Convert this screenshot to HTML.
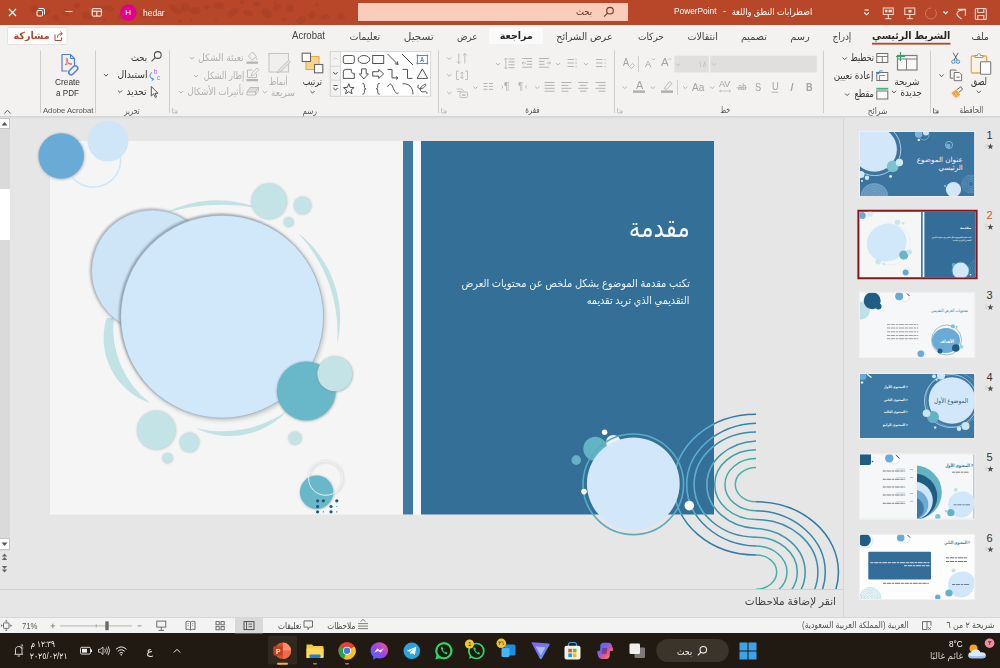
<!DOCTYPE html>
<html lang="ar">
<head>
<meta charset="utf-8">
<title>PowerPoint</title>
<style>
*{box-sizing:border-box;margin:0;padding:0}
html,body{width:1000px;height:668px;overflow:hidden;background:#e6e6e6}
body{position:relative;font-family:"Liberation Sans","DejaVu Sans",sans-serif;font-size:11px;color:#333}
.abs{position:absolute}
.t{position:absolute;white-space:nowrap;line-height:1}
.rtl{direction:rtl;transform-origin:100% 50%}
.ltr{direction:ltr;transform-origin:0 50%}
#titlebar{left:0;top:0;width:1000px;height:24.500px;background:#b8472a}
#tabs{left:0;top:25px;width:1000px;height:22px;background:#f3f2f1}
#ribbon{left:0;top:47px;width:1000px;height:69px;background:#f3f2f1}
#ribsh{left:0;top:116px;width:1000px;height:3px;background:linear-gradient(#d2d2d2,#e6e6e6)}
#work{left:0;top:116px;width:845px;height:472px;background:#e6e6e6}
#thumbs{left:845px;top:118px;width:155px;height:499px;background:#e6e6e6}
#notes{left:0;top:588.700px;width:843px;height:27px;background:#e6e6e6;border-top:1px solid #d0d0d0}
#status{left:0;top:617px;width:1000px;height:17px;background:#f3f3f3;border-top:1px solid #d6d6d6}
#taskbar{left:0;top:633.300px;width:1000px;height:34.700px;background:#201a12}
</style>
</head>
<body>
<div id="titlebar" class="abs">
<svg class="abs" style="left:0;top:0" width="1000" height="25" viewBox="0 0 1000 25" fill="none" stroke="#fff" stroke-width="1">
<!-- subtle pattern -->
<g stroke="none" fill="#a03a20" opacity=".38">
<ellipse cx="34" cy="8.8" rx="3.8" ry="3.6" transform="rotate(-31 34 8.8)"/><ellipse cx="44" cy="13.5" rx="7.5" ry="2.5" transform="rotate(-29 44 13.5)"/><circle cx="48" cy="3.5" r="1.1"/><ellipse cx="56" cy="17.9" rx="3.6" ry="2.6" transform="rotate(40 56 17.9)"/><ellipse cx="66" cy="13.5" rx="3.2" ry="2.6" transform="rotate(31 66 13.5)"/><ellipse cx="77" cy="5.6" rx="3.6" ry="2.8" transform="rotate(-17 77 5.6)"/><circle cx="84" cy="17.6" r="1.2"/><ellipse cx="87" cy="15.8" rx="5.8" ry="3.5" transform="rotate(23 87 15.8)"/><ellipse cx="99" cy="8.7" rx="5.9" ry="3.1" transform="rotate(-2 99 8.7)"/><circle cx="104" cy="20.7" r="1.9"/><ellipse cx="109" cy="8.4" rx="5.5" ry="2.9" transform="rotate(17 109 8.4)"/><circle cx="118" cy="20.4" r="1.1"/><ellipse cx="121" cy="16.6" rx="3.8" ry="3.2" transform="rotate(-35 121 16.6)"/><ellipse cx="131" cy="13.0" rx="6.9" ry="4.0" transform="rotate(3 131 13.0)"/><ellipse cx="145" cy="13.4" rx="5.3" ry="4.1" transform="rotate(-6 145 13.4)"/><circle cx="152" cy="3.4" r="1.1"/><ellipse cx="159" cy="14.6" rx="8.0" ry="4.1" transform="rotate(-4 159 14.6)"/><ellipse cx="175" cy="9.2" rx="7.7" ry="2.9" transform="rotate(38 175 9.2)"/><circle cx="180" cy="21.2" r="1.9"/><ellipse cx="185" cy="7.5" rx="5.0" ry="4.2" transform="rotate(-30 185 7.5)"/><circle cx="191" cy="19.5" r="1.3"/><ellipse cx="195" cy="10.7" rx="5.8" ry="3.8" transform="rotate(5 195 10.7)"/><ellipse cx="207" cy="7.2" rx="3.4" ry="2.4" transform="rotate(-11 207 7.2)"/><circle cx="216" cy="19.2" r="1.2"/><ellipse cx="219" cy="5.6" rx="5.7" ry="3.5" transform="rotate(0 219 5.6)"/><ellipse cx="233" cy="12.3" rx="6.1" ry="3.7" transform="rotate(-34 233 12.3)"/><circle cx="242" cy="2.3" r="2.1"/><ellipse cx="248" cy="13.1" rx="5.0" ry="3.0" transform="rotate(21 248 13.1)"/><ellipse cx="257" cy="4.2" rx="4.0" ry="2.4" transform="rotate(3 257 4.2)"/><ellipse cx="267" cy="13.2" rx="5.7" ry="4.4" transform="rotate(38 267 13.2)"/><circle cx="275" cy="3.2" r="1.7"/><ellipse cx="277" cy="7.5" rx="4.7" ry="2.9" transform="rotate(-25 277 7.5)"/><circle cx="284" cy="19.5" r="2.2"/><ellipse cx="290" cy="8.6" rx="3.7" ry="3.9" transform="rotate(-7 290 8.6)"/><circle cx="297" cy="20.6" r="1.6"/><ellipse cx="301" cy="20.1" rx="4.8" ry="3.7" transform="rotate(-37 301 20.1)"/><ellipse cx="312" cy="14.6" rx="3.5" ry="4.1" transform="rotate(26 312 14.6)"/><circle cx="317" cy="4.6" r="1.9"/><ellipse cx="325" cy="17.0" rx="4.6" ry="2.6" transform="rotate(-16 325 17.0)"/><ellipse cx="341" cy="16.3" rx="4.1" ry="3.3" transform="rotate(5 341 16.3)"/>
</g>
<!-- close -->
<path d="M9 9L16 16M16 9L9 16" stroke-width="1.1"/>
<!-- restore -->
<rect x="37" y="10.500" width="5.500" height="5.500" rx="1"/><path d="M38.500 8.500H43a1.500 1.500 0 0 1 1.500 1.500V14.500"/>
<!-- minimize -->
<path d="M65.500 11.500H72.500"/>
<!-- ribbon display -->
<rect x="92.200" y="8.700" width="9.200" height="7.400" rx=".8"/><path d="M92.200 11.200H101.400M96.800 11.200V16"/>
<!-- avatar -->
<circle cx="128.300" cy="12.600" r="8.300" fill="#e3008c" stroke="none"/>
<!-- search box -->
<rect x="358" y="3" width="270" height="18" fill="#f9cdba" stroke="none"/>
<g stroke="#6b3a2a" stroke-width="1.100"><circle cx="610" cy="10.700" r="3.300"/><path d="M607.600 13.100L604 16.700"/></g>
<!-- save -->
<g stroke="#f6d5cb" stroke-width="1.100"><rect x="975.300" y="8.500" width="11" height="11" rx="1"/><path d="M977.800 8.500V12.500H983.800V8.500M977.800 19.500V15.500H983.800V19.500"/></g>
<!-- undo -->
<path d="M957.700 9.300H965.400V15.700" stroke-width="1.150" stroke="#f8ddd4"/>
<path d="M965 9.600C960 9.600 951.500 13 961.700 19" stroke-width="1.150" stroke="#f8ddd4"/>
<path d="M943.500 11.500L945.600 13.600L947.700 11.500" stroke-width="1.100"/>
<!-- redo disabled -->
<path d="M931 8A5.500 5.500 0 1 0 934.800 9.600" stroke="#d77560" stroke-width="1"/>
<!-- present icons -->
<g stroke="#f8ddd4" stroke-width="1"><rect x="904.800" y="8" width="10" height="6.500"/><path d="M909.800 14.500V18.500M906.800 18.700H912.800"/><rect x="908.500" y="10" width="3" height="2.500" fill="#f8ddd4" stroke="none"/>
<rect x="883.300" y="8" width="10" height="6.500"/><path d="M888.300 14.500V18.500M885.300 18.700H891.300"/><rect x="885" y="9.800" width="2.500" height="2.500" fill="#f8ddd4" stroke="none"/><rect x="888.500" y="9.800" width="3.500" height="2.500" fill="#f8ddd4" stroke="none"/></g>
<!-- customize -->
<path d="M864.500 10H868.700" stroke-width="1"/><path d="M864.300 12.500L866.600 14.800L868.900 12.500" stroke-width="1.100"/>
</svg>
</div>
<div id="tabs" class="abs"></div>
<div id="ribbon" class="abs"></div>
<svg id="ribsvg" class="abs" style="left:0;top:25px" width="1000" height="93" viewBox="0 25 1000 93" fill="none">
<!-- tabs -->
<rect x="489" y="27.500" width="54" height="16.500" fill="#fafafa"/>
<rect x="872" y="42.800" width="78.500" height="1.800" fill="#b7472a"/>
<rect x="7.500" y="27.500" width="59.500" height="17" rx="2" fill="#fff" stroke="#dcdcdc" stroke-width=".8"/>
<g stroke="#b7472a" stroke-width="1"><path d="M55 34.500V40.500H61.500V37.500"/><path d="M57.500 37.500C57.500 35 59 33.600 62 33.600M60.300 31.700L62.300 33.600L60.300 35.500"/></g>
<!-- group separators -->
<g stroke="#cfcdcb" stroke-width="1"><path d="M930.500 50.500V113M823.500 50.500V113M614.500 50.500V113M438.500 50.500V113M169.500 50.500V113M95.500 50.500V113M40.500 50.500V113"/></g>
<!-- collapse chevron -->
<path d="M4.300 113.500L7.500 110.300L10.700 113.500" stroke="#555" stroke-width="1"/>
<!-- dialog launchers -->
<g stroke="#8a8a8a" stroke-width=".8"><path d="M933.500 108V113H938.500M935 109.500L938 112.500M938 110.300V112.500H935.800" stroke="#5a5a5a"/>
<path d="M617.500 108V113H622.500M619 109.500L622 112.500M622 110.300V112.500H619.800" stroke="#b9b9b9"/>
<path d="M441.500 108V113H446.500M443 109.500L446 112.500M446 110.300V112.500H443.800" stroke="#b9b9b9"/>
<path d="M172.500 108V113H177.500M174 109.500L177 112.500M177 110.300V112.500H174.800" stroke="#b9b9b9"/></g>
<!-- CLIPBOARD: paste -->
<rect x="971.300" y="56" width="15.400" height="17" rx="1" fill="#fbf3e6" stroke="#e9a94c" stroke-width="1.300"/>
<path d="M975 57.500V55.500H977.300C977.300 53 980.500 53 980.500 55.500H982.800V57.500Z" fill="#f3f2f1" stroke="#8a8a8a" stroke-width=".9"/>
<rect x="980.500" y="61.800" width="10.200" height="12.500" rx=".8" fill="#fcfcfc" stroke="#7a7a7a" stroke-width="1.100"/>
<path d="M976.700 90.800L978.800 92.900L980.900 90.800" stroke="#555" stroke-width="1"/>
<!-- scissors -->
<g stroke="#555" stroke-width=".9"><path d="M953.200 52.800L957.300 60M958.200 52.800L954.100 60"/></g>
<g stroke="#3f8fd6" stroke-width="1"><circle cx="953.400" cy="61.700" r="1.700"/><circle cx="958" cy="61.700" r="1.700"/></g>
<!-- copy -->
<g stroke="#6a6a6a" stroke-width=".95"><path d="M953.500 78.200H950.300V70H955.500L956.500 71"/><path d="M954.200 72.500H959.300L961.600 74.800V80.700H954.200Z" fill="#fbfbfb"/><path d="M956.300 77.200H959.600"/></g>
<path d="M939.400 74.500L941.500 76.600L943.600 74.500" stroke="#555" stroke-width="1"/>
<!-- format painter -->
<path d="M951.300 93.300L956.200 89.300L960.300 94.800L955.800 98.300Z" fill="#f2a33a"/>
<path d="M957 89.600L960.800 86.800L962.600 89.200L959 92.200" stroke="#555" stroke-width=".9" fill="#f3f2f1"/>
<path d="M953 94.300L956.500 97.800M954.800 92.800L958 96.500" stroke="#fbe3bf" stroke-width=".6"/>
<!-- SLIDES: new slide -->
<rect x="897.500" y="55.500" width="19.500" height="14.500" fill="#f8f8f8" stroke="#7d7d7d" stroke-width="1.200"/>
<path d="M897.500 59H917M906.500 59V70" stroke="#7d7d7d" stroke-width="1"/>
<path d="M900.500 52V61M896 56.500H905" stroke="#36a067" stroke-width="1.200"/>
<path d="M891.900 90.800L894 92.900L896.100 90.800" stroke="#555" stroke-width="1"/>
<!-- layout -->
<rect x="876.800" y="53.500" width="11" height="9" fill="#fbfbfb" stroke="#6f6f6f" stroke-width="1"/><path d="M876.800 56.500H887.800M882.300 56.500V62.500" stroke="#6f6f6f" stroke-width=".9"/>
<path d="M842.500 57.500L844.600 59.600L846.700 57.500" stroke="#555" stroke-width="1"/>
<!-- reset -->
<rect x="876.800" y="72.500" width="11" height="8" fill="#fbfbfb" stroke="#6f6f6f" stroke-width="1"/><path d="M879.500 80V75.500H885" stroke="#6f6f6f" stroke-width=".8"/>
<path d="M878 74C878 71 880.500 70.500 882.500 71M878 74L876.300 72M878 74L880 72.500" stroke="#2b88d8" stroke-width="1"/>
<!-- section -->
<rect x="876.800" y="91" width="11" height="8" fill="#fbfbfb" stroke="#6f6f6f" stroke-width="1"/><rect x="876.300" y="87.800" width="12" height="1.800" fill="#4caf7d"/>
<path d="M845 93.500L847.100 95.600L849.200 93.500" stroke="#555" stroke-width="1"/>

<!-- FONT group -->
<rect x="710.300" y="55.700" width="106.500" height="16.700" fill="#e1dfdd"/><rect x="674.300" y="55.700" width="34.500" height="16.700" fill="#e1dfdd"/>
<path d="M711.9 63.5L714.0 65.6L716.1 63.5" stroke="#c0c0c0" stroke-width="1"/><path d="M675.9 63.5L678.0 65.6L680.1 63.5" stroke="#c0c0c0" stroke-width="1"/>
<path d="M638.500 56V72M677.500 80V95" stroke="#d2d0ce" stroke-width="1"/>
<path d="M668.500 59.800L670 58.300L671.500 59.800M652 58.500L653.500 60L655 58.500" stroke="#b0b0b0" stroke-width=".8"/>
<path d="M629.500 66.500L632.500 63.500L634.500 65.500L631.500 68.500Z" stroke="#b3b3b3" stroke-width=".8" fill="#f3f2f1"/>
<rect x="633" y="90.400" width="12" height="2.500" fill="#b0b0b0"/><rect x="661" y="90.400" width="12" height="2.500" fill="#b0b0b0"/>
<path d="M664 88.500L669.500 81.500L672 83.500L666.500 89.500Z" stroke="#b3b3b3" stroke-width=".9"/>
<path d="M622.6 86.5L624.7 88.6L626.8 86.5" stroke="#b5b5b5" stroke-width="1"/><path d="M650.9 86.5L653.0 88.6L655.1 86.5" stroke="#b5b5b5" stroke-width="1"/><path d="M683.2 86.5L685.3 88.6L687.4 86.5" stroke="#b5b5b5" stroke-width="1"/><path d="M710.1 86.5L712.2 88.6L714.3 86.5" stroke="#b5b5b5" stroke-width="1"/>
<path d="M719.500 91H730.500M719.500 91L721 89.800M719.500 91L721 92.200M730.500 91L729 89.800M730.500 91L729 92.200" stroke="#b3b3b3" stroke-width=".7"/>
<path d="M736.500 87.800H746.800" stroke="#b3b3b3" stroke-width=".8"/><path d="M771.500 92.300H778.300" stroke="#b3b3b3" stroke-width=".9"/>
<!-- PARAGRAPH -->
<path d="M596.0 59.5H602.5M596.0 63.0H602.5M596.0 66.5H602.5" stroke="#b3b3b3" stroke-width="1"/><path d="M604.500 59.500h1.200M604.500 63h1.200M604.500 66.500h1.200" stroke="#b3b3b3" stroke-width="1.200"/>
<path d="M583.9 63.0L586.0 65.1L588.1 63.0" stroke="#b5b5b5" stroke-width="1"/><path d="M567.5 59.5H574.0M567.5 63.0H574.0M567.5 66.5H574.0" stroke="#b3b3b3" stroke-width="1"/><path d="M576 58.500v2M576 62v2M576 65.500v2" stroke="#b3b3b3" stroke-width=".8"/>
<path d="M555.9 63.0L558.0 65.1L560.1 63.0" stroke="#b5b5b5" stroke-width="1"/><path d="M539.0 58.5H549.0M539.0 61.4H544.5M539.0 64.3H544.5M539.0 67.2H549.0" stroke="#b3b3b3" stroke-width="1"/><path d="M546.500 63H550.500M549 61.500L550.500 63L549 64.500" stroke="#b3b3b3" stroke-width=".8"/>
<path d="M522.2 58.5H532.2M526.7 61.4H532.2M526.7 64.3H532.2M522.2 67.2H532.2" stroke="#b3b3b3" stroke-width="1"/><path d="M522 63H526M523.500 61.500L522 63L523.500 64.500" stroke="#b3b3b3" stroke-width=".8"/>
<path d="M508.5 59.0H514.5M508.5 61.9H514.5M508.5 64.8H514.5M508.5 67.7H514.5" stroke="#b3b3b3" stroke-width="1"/><path d="M505.800 58V69M505.800 58L504.300 59.700M505.800 58L507.300 59.700M505.800 69L504.300 67.300M505.800 69L507.300 67.300" stroke="#b3b3b3" stroke-width=".8"/>
<path d="M495.9 63.0L498.0 65.1L500.1 63.0" stroke="#b5b5b5" stroke-width="1"/><path d="M595.5 82.5H605.5M598.5 85.4H605.5M595.5 88.3H605.5M598.5 91.2H605.5" stroke="#b3b3b3" stroke-width="1"/><path d="M578.2 82.5H588.2M580.0 85.4H586.5M578.2 88.3H588.2M580.0 91.2H586.5" stroke="#b3b3b3" stroke-width="1"/><path d="M561.4 82.5H571.4M561.4 85.4H568.4M561.4 88.3H571.4M561.4 91.2H568.4" stroke="#b3b3b3" stroke-width="1"/><path d="M544.6 82.5H554.6M544.6 85.4H554.6M544.6 88.3H554.6M544.6 91.2H554.6" stroke="#b3b3b3" stroke-width="1"/><path d="M535.2 86.5L537.3 88.6L539.4 86.5" stroke="#b5b5b5" stroke-width="1"/>
<path d="M527 85.500L525.300 87L527 88.500" stroke="#b3b3b3" stroke-width=".8"/>
<path d="M501.500 85.500L503 87L501.500 88.500" stroke="#b3b3b3" stroke-width=".8"/>
<path d="M483.5 83.5H487.5M483.5 86.4H487.5M483.5 89.3H487.5" stroke="#b3b3b3" stroke-width="1"/><path d="M489.0 83.5H493.0M489.0 86.4H493.0M489.0 89.3H493.0" stroke="#b3b3b3" stroke-width="1"/><path d="M473.4 86.5L475.5 88.6L477.6 86.5" stroke="#b5b5b5" stroke-width="1"/>
<path d="M458.800 53.500V63.500M458.800 63.500L457 61.500M458.800 63.500L460.600 61.500M464.800 63.500V53.500M464.800 53.500L463 55.500M464.800 53.500L466.600 55.500" stroke="#b3b3b3" stroke-width=".8"/>
<path d="M459 71H456.500V79.500H459M465 71H467.500V79.500H465M462 72V78.500M460.500 73.500L462 72L463.500 73.500M460.500 77L462 78.500L463.500 77" stroke="#b3b3b3" stroke-width=".8"/>
<path d="M456.500 89H462L464 91M457 91.500H461.500" stroke="#b3b3b3" stroke-width=".8"/><rect x="460" y="92" width="7.500" height="5.500" rx="1" stroke="#b3b3b3" stroke-width=".8"/><rect x="462" y="94" width="3.500" height="2" fill="#c8c8c8"/>
<path d="M447.2 57.4L449.3 59.5L451.4 57.4" stroke="#b5b5b5" stroke-width="1"/><path d="M447.2 74.2L449.3 76.3L451.4 74.2" stroke="#b5b5b5" stroke-width="1"/><path d="M447.2 91.8L449.3 93.9L451.4 91.8" stroke="#b5b5b5" stroke-width="1"/>
<!-- DRAWING: shapes gallery -->
<rect x="330.300" y="51.500" width="100.400" height="44.700" fill="#fff" stroke="#d0d0d0" stroke-width=".8"/>
<rect x="330.300" y="51.500" width="10.300" height="44.700" fill="#f3f2f1" stroke="#d0d0d0" stroke-width=".8"/><path d="M330.300 66.300H340.600M330.300 80.200H340.600" stroke="#d0d0d0" stroke-width=".8"/>
<path d="M333.700 59.500L335.500 57.700L337.300 59.500" stroke="#c0c0c0" stroke-width=".8"/><path d="M333.4 72.2L335.5 74.3L337.6 72.2" stroke="#444" stroke-width="1"/><path d="M333.500 85.500H337.500" stroke="#444" stroke-width=".9"/><path d="M333.4 88.0L335.5 90.1L337.6 88.0" stroke="#444" stroke-width="1"/>
<rect x="343.3" y="55.5" width="11" height="8" rx="1.800" stroke="#4a4a4a" stroke-width=".95"/><ellipse cx="363.9" cy="59.5" rx="5.800" ry="4" stroke="#4a4a4a" stroke-width=".95"/><rect x="372.7" y="55.5" width="11" height="8" stroke="#4a4a4a" stroke-width=".95"/><path d="M387.5 54.0L398 64.5M398 64.5L394.8 63.7M398 64.5L397.2 61.3" stroke="#4a4a4a" stroke-width=".95"/><path d="M402.0 54.0L413.0 65.0" stroke="#4a4a4a" stroke-width=".95"/><rect x="417.4" y="55.5" width="10" height="8" stroke="#3f93d8" stroke-width="1"/><g fill="#3f93d8"><circle cx="417.4" cy="55.5" r=".9"/><circle cx="427.4" cy="55.5" r=".9"/><circle cx="417.4" cy="63.5" r=".9"/><circle cx="427.4" cy="63.5" r=".9"/></g>
<path d="M343.3 71.9Q343.3 69.4 345.8 69.4H351.3Q350.8 73.9 354.3 73.4V78.4H343.3Z" stroke="#4a4a4a" stroke-width=".95"/><path d="M361.59999999999997 68.9H366.2V73.9H368.4L363.9 78.9L359.4 73.9H361.59999999999997Z" stroke="#4a4a4a" stroke-width=".95"/><path d="M372.7 71.7H378.7V69.4L383.7 73.9L378.7 78.4V76.10000000000001H372.7Z" stroke="#4a4a4a" stroke-width=".95"/><path d="M387.5 69.4H392V77.9H398M398 77.9L396 76.4M398 77.9L396 79.4" stroke="#4a4a4a" stroke-width=".95"/><path d="M402.5 69.4H407.5V78.4H412.5" stroke="#4a4a4a" stroke-width=".95"/><path d="M422.4 68.9L427.7 78.4H417.09999999999997Z" stroke="#4a4a4a" stroke-width=".95"/>
<path d="M348.8 83.7L350.2 87.4L354.1 87.6L351.1 90.0L352.1 93.8L348.8 91.7L345.5 93.8L346.5 90.0L343.5 87.6L347.4 87.4Z" stroke="#4a4a4a" stroke-width=".95"/><path d="M362.4 83.3Q364.4 83.3 364.4 85.3V87.3Q364.4 88.8 365.9 88.8Q364.4 88.8 364.4 90.3V92.3Q364.4 94.3 362.4 94.3" stroke="#4a4a4a" stroke-width=".95"/><path d="M379.7 83.3Q377.7 83.3 377.7 85.3V87.3Q377.7 88.8 376.2 88.8Q377.7 88.8 377.7 90.3V92.3Q377.7 94.3 379.7 94.3" stroke="#4a4a4a" stroke-width=".95"/><path d="M387.5 86.8C391 80.8 392 85.8 394 89.8S397 93.8 398.5 92.8" stroke="#4a4a4a" stroke-width=".95"/><path d="M402.5 83.8C408.5 83.3 413.0 86.8 413.0 94.3" stroke="#4a4a4a" stroke-width=".95"/><path d="M418.4 84.8C416.4 88.8 420.4 89.8 423.4 87.8C427.4 84.8 426.4 82.8 422.4 85.8C418.4 88.8 420.4 92.8 424.4 91.8C426.4 91.3 427.4 92.3 426.9 93.8" stroke="#4a4a4a" stroke-width=".95"/>
<!-- arrange -->
<rect x="306" y="56.500" width="13" height="13" fill="#fbd58a" stroke="#e9a94c" stroke-width="1.100"/><rect x="302.200" y="53.200" width="8.300" height="8.300" fill="#fcfcfc" stroke="#666" stroke-width="1.100"/><rect x="314.500" y="64.500" width="8.300" height="8.300" fill="#fcfcfc" stroke="#666" stroke-width="1.100"/>
<path d="M310.4 91.0L312.5 93.1L314.6 91.0" stroke="#555" stroke-width="1"/>
<!-- quick styles (disabled) -->
<rect x="269" y="53.500" width="19.500" height="18.500" fill="#f0efee" stroke="#c6c6c6" stroke-width="1.100"/><path d="M277 73L279.500 69L288.500 60.500L290.300 62L281.500 71Z" fill="#e4e3e2" stroke="#bdbdbd" stroke-width=".9"/><path d="M262.7 91.0L264.8 93.1L266.9 91.0" stroke="#b5b5b5" stroke-width="1"/>
<!-- shape fill/outline/effects (disabled) -->
<path d="M248.500 56L252.500 52L256.500 56.500L252 60Z" stroke="#b4b4b4" stroke-width=".9"/><path d="M256 57.500Q257.500 59.500 256.800 60.300" stroke="#b4b4b4" stroke-width=".8"/><rect x="246.500" y="61.500" width="11.500" height="2.300" fill="#b4b4b4"/>
<path d="M247.500 70H252.500M247.500 70V77.500H256.500V74" stroke="#b4b4b4" stroke-width=".9"/><path d="M251 76L252 73L257 68L258.800 69.800L254 74.800Z" stroke="#b4b4b4" stroke-width=".8"/><rect x="246.500" y="79" width="11.500" height="2.300" fill="#b4b4b4"/>
<path d="M247 92L250 87.500H258.500L255.500 92Z" fill="#dcdcdc" stroke="#b4b4b4" stroke-width=".8"/><path d="M247 92V95H255.500V92M255.500 95L258.500 90.500V87.500" stroke="#b4b4b4" stroke-width=".8"/>
<path d="M189.9 57.0L192.0 59.1L194.1 57.0" stroke="#b5b5b5" stroke-width="1"/><path d="M193.9 75.0L196.0 77.1L198.1 75.0" stroke="#b5b5b5" stroke-width="1"/><path d="M178.9 91.0L181.0 93.1L183.1 91.0" stroke="#b5b5b5" stroke-width="1"/>
<!-- EDITING -->
<g stroke="#4a4a4a" stroke-width="1.050"><circle cx="157.800" cy="55" r="3.400"/><path d="M155.400 57.400L151.500 61.300"/></g>
<path d="M151.800 72.500C149 74.500 149.500 78.500 153.500 79.300M153.500 79.300L151.800 77.600M153.500 79.300L151.700 80.800" stroke="#2b88d8" stroke-width="1"/>
<path d="M103.9 74.0L106.0 76.1L108.1 74.0" stroke="#555" stroke-width="1"/><path d="M151.300 86.500V96L153.600 93.800L155.300 97.500L156.600 96.900L155 93.300H158Z" stroke="#444" stroke-width=".9" fill="#fdfdfd"/>
<path d="M117.9 90.5L120.0 92.6L122.1 90.5" stroke="#555" stroke-width="1"/>
<!-- ACROBAT -->
<path d="M62 54.500H70.500L74.500 58.500V66M62 54.500V71H67.500" stroke="#4f7fe0" stroke-width="1.200"/><path d="M70.500 54.500V58.500H74.500" stroke="#4f7fe0" stroke-width="1"/><path d="M65 65C67 63 68 60 67.500 58.500C67 57.500 66 58.500 66.500 60C67 62 69.500 64.500 71 64.500C72.500 64.500 72 63 70 63.300C68 63.500 66 64.500 65 65Z" stroke="#e0524a" stroke-width=".8"/><g stroke="#4f7fe0" stroke-width="1.500" stroke-linecap="round"><path d="M71.500 68.500L73.500 66.500A2.300 2.300 0 0 1 77 70L75.500 71.500"/><path d="M75 72L73 74A2.300 2.300 0 0 1 69.500 70.500L71 69"/></g>

</svg>
<div id="work" class="abs"></div>
<div id="ribsh" class="abs"></div>
<svg id="worksvg" class="abs" style="left:0;top:118px" width="845" height="472" viewBox="0 118 845 472">
<defs>
<filter id="sh" x="-20%" y="-20%" width="140%" height="140%"><feGaussianBlur stdDeviation="2.2"/></filter>
<filter id="sh2" x="-20%" y="-20%" width="140%" height="140%"><feGaussianBlur stdDeviation=".9"/></filter>
<filter id="sh1" x="-30%" y="-30%" width="160%" height="160%"><feGaussianBlur stdDeviation="1.2"/></filter>
<clipPath id="wclip"><rect x="11" y="118" width="834" height="472"/></clipPath>
</defs>
<g clip-path="url(#wclip)">
<g id="mainslide">
<!-- slide -->
<rect x="50" y="141" width="664" height="373.5" fill="#f5f5f5"/>
<rect x="403" y="141" width="10" height="373.5" fill="#4079a2"/>
<rect x="413" y="141" width="8" height="373.5" fill="#f4f8fb"/>
<rect x="421" y="141" width="293" height="373.5" fill="#336f97"/>
<!-- top-left circles -->
<path d="M72.800 177.400A27 27 0 0 0 119.600 153" fill="none" stroke="#cfe6f7" stroke-width="1.6"/>
<circle cx="108" cy="141" r="20.5" fill="#cfe5f8"/>
<circle cx="61.5" cy="156.5" r="23.5" fill="#8a9aa6" opacity=".55" filter="url(#sh1)"/>
<circle cx="61.2" cy="156" r="22.7" fill="#6aaad6"/>
<!-- crescents -->
<g fill="#c2e2e4">
<path d="M165 213A113.600 113.600 0 0 1 258 208A200 200 0 0 0 165 213Z"/>
<path d="M298 233A108.700 108.700 0 0 1 337 345A145.800 145.800 0 0 0 298 233Z"/>
<path d="M106.600 318A68.600 68.600 0 0 0 150 403A95.600 95.600 0 0 1 113.600 318Z"/>
<path d="M196 428.300A77.700 77.700 0 0 0 287 411.100A114.600 114.600 0 0 1 196 428.300Z"/>
</g>
<!-- small light teal circles -->
<g fill="#8f9a9c" opacity=".5" filter="url(#sh1)">
<circle cx="269.3" cy="201.4" r="18"/><circle cx="302.7" cy="205.6" r="9"/><circle cx="288.8" cy="222.3" r="5"/>
<circle cx="156.5" cy="430.3" r="19.6"/><circle cx="189.5" cy="442.6" r="10"/><circle cx="167.7" cy="458.2" r="5.3"/><circle cx="295.1" cy="438.3" r="6.7"/>
</g>
<g fill="#c4e3e6">
<circle cx="269" cy="201" r="17.8"/><circle cx="302.4" cy="205.3" r="8.8"/><circle cx="288.5" cy="222" r="4.8"/>
<circle cx="156.2" cy="429.9" r="19.4"/><circle cx="189.2" cy="442.2" r="9.8"/><circle cx="167.4" cy="457.9" r="5.1"/><circle cx="294.8" cy="438" r="6.5"/>
</g>
<!-- back circle -->
<circle cx="153.300" cy="272.300" r="61.500" fill="#5a6670" opacity=".28" filter="url(#sh)"/>
<circle cx="151.300" cy="269.800" r="61.300" fill="#4d5a66" opacity=".36" filter="url(#sh2)"/>
<circle cx="152.500" cy="271" r="61" fill="#cee4f7" stroke="#a5b3c0" stroke-width=".6"/>
<!-- front circle -->
<circle cx="223.200" cy="318.200" r="102" fill="#4a545c" opacity=".32" filter="url(#sh)"/>
<circle cx="220.800" cy="315.400" r="101.800" fill="#43505c" opacity=".4" filter="url(#sh2)"/>
<circle cx="222.100" cy="316.700" r="101.400" fill="#d1e7fa" stroke="#9aa9b7" stroke-width=".6"/>
<!-- teal circles -->
<circle cx="306.6" cy="391.5" r="30" fill="#77868c" opacity=".5" filter="url(#sh1)"/>
<circle cx="306.3" cy="391" r="29.5" fill="#69b8ca"/>
<circle cx="335.1" cy="374.2" r="17.8" fill="#77868c" opacity=".55" filter="url(#sh1)"/>
<circle cx="334.8" cy="373.8" r="17.4" fill="#c4e3e6"/>
<!-- bottom small -->
<circle cx="326" cy="478.8" r="17" fill="none" stroke="#d9dcdd" stroke-width="2.6" filter="url(#sh1)"/>
<circle cx="316.9" cy="492.5" r="17" fill="#77868c" opacity=".45" filter="url(#sh1)"/>
<circle cx="316.6" cy="492.2" r="16.7" fill="#69b8ca"/>
<circle cx="325.6" cy="478.3" r="17" fill="none" stroke="#f2f6f7" stroke-width=".9"/>
<g fill="#1c5b74">
<circle cx="317.6" cy="500.8" r="1.6"/><circle cx="323.3" cy="500.8" r="1.6"/><circle cx="336.8" cy="500.8" r="1.6"/>
<circle cx="317.6" cy="506.5" r="1.6"/><circle cx="331" cy="506.5" r="1.6"/>
<circle cx="317.6" cy="511.8" r="1.6"/><circle cx="331" cy="511.8" r="1.6"/>
<circle cx="323.3" cy="511.8" r=".6"/><circle cx="336.8" cy="511.8" r=".6"/><circle cx="336.8" cy="506.5" r=".5"/>
</g>
<!-- right: wave arcs -->
<g fill="none" stroke-width="1.5">
<path d="M756 467.4A20.7 17.2 0 0 0 756 501.8" stroke="#48b2a5"/>
<path d="M756 554.9A20.7 17.2 0 0 1 756 589.3" stroke="#48b2a5"/>
<path d="M756 458.6A31.0 26.0 0 0 0 756 510.7" stroke="#44a9a6"/>
<path d="M756 546.1A31.0 26.0 0 0 1 756 598.1" stroke="#44a9a6"/>
<path d="M756 449.7A41.3 34.9 0 0 0 756 519.5" stroke="#40a0a7"/>
<path d="M756 537.2A41.3 34.9 0 0 1 756 607.0" stroke="#40a0a7"/>
<path d="M756 440.9A51.6 43.8 0 0 0 756 528.4" stroke="#3c97a8"/>
<path d="M756 528.4A51.6 43.8 0 0 1 756 615.9" stroke="#3c97a8"/>
<path d="M756 432.0A61.9 52.6 0 0 0 756 537.2" stroke="#378ea8"/>
<path d="M756 519.5A61.9 52.6 0 0 1 756 624.7" stroke="#378ea8"/>
<path d="M756 423.2A72.2 61.5 0 0 0 756 546.1" stroke="#3385a9"/>
<path d="M756 510.7A72.2 61.5 0 0 1 756 633.6" stroke="#3385a9"/>
<path d="M756 414.3A82.5 70.3 0 0 0 756 554.9" stroke="#2f7caa"/>
<path d="M756 501.8A82.5 70.3 0 0 1 756 642.4" stroke="#2f7caa"/>
</g>
<clipPath id="bclip"><rect x="421" y="141" width="293" height="373.5"/></clipPath>
<g fill="none" stroke="#5badd0" stroke-width="1.5" clip-path="url(#bclip)">
<path d="M756 467.4A20.7 17.2 0 0 0 756 501.8" />
<path d="M756 458.6A31.0 26.0 0 0 0 756 510.7" />
<path d="M756 449.7A41.3 34.9 0 0 0 756 519.5" />
<path d="M756 440.9A51.6 43.8 0 0 0 756 528.4" />
<path d="M756 432.0A61.9 52.6 0 0 0 756 537.2" />
<path d="M756 423.2A72.2 61.5 0 0 0 756 546.1" />
<path d="M756 414.3A82.5 70.3 0 0 0 756 554.9" />
</g>
<!-- right blue-panel circles -->
<circle cx="595.3" cy="448.8" r="12" fill="#63b3c4"/>
<circle cx="576.2" cy="460.1" r="4.8" fill="#63b3c4"/>
<circle cx="613.300" cy="442.300" r="7.400" fill="#eaf3f9"/>
<circle cx="633.300" cy="484.300" r="50.300" fill="none" stroke="#58adc3" stroke-width="1.600"/>
<circle cx="633.3" cy="483.8" r="46.4" fill="#d2e8fa"/>
<circle cx="604.6" cy="432.3" r="2.7" fill="#fff"/>
<circle cx="584" cy="491.6" r="2.8" fill="#fff"/>
<circle cx="689.3" cy="505.6" r="4.8" fill="#fdfdfd"/>
</g>
</g>
</svg>

<!-- left scrollbar -->
<div class="abs" style="left:0;top:118px;width:10px;height:433px;background:#dadada"></div>
<div class="abs" style="left:0;top:118px;width:10px;height:11px;background:#fff;border:1px solid #c6c6c6;border-left:0"></div>
<svg class="abs" style="left:0;top:118px" width="10" height="11" viewBox="0 0 10 11"><path d="M1.500 7.500L4.500 4L7.500 7.500Z" fill="#555"/></svg>
<div class="abs" style="left:0;top:189px;width:10px;height:51px;background:#fff"></div>
<div class="abs" style="left:0;top:538px;width:10px;height:12px;background:#fff;border:1px solid #c6c6c6;border-left:0"></div>
<svg class="abs" style="left:0;top:538px" width="10" height="40" viewBox="0 0 10 40"><path d="M1.500 4.500L4.500 8L7.500 4.500Z" fill="#555"/>
<path d="M1.800 18.500L4.500 15.500L7.200 18.500ZM1.800 22L4.500 19L7.200 22Z" fill="#666"/>
<path d="M1.800 28L4.500 31L7.200 28ZM1.800 31.500L4.500 34.500L7.200 31.500Z" fill="#666"/></svg>
<div id="thumbs" class="abs"></div>
<svg id="thumbsvg" class="abs" style="left:840px;top:118px" width="160" height="499" viewBox="840 118 160 499">
<defs><clipPath id="tc0"><rect x="859.75" y="131.75" width="114.75" height="64.55"/></clipPath><clipPath id="tc1"><rect x="859.75" y="212.2" width="114.75" height="64.55"/></clipPath><clipPath id="tc2"><rect x="859.75" y="292.5" width="114.75" height="64.55"/></clipPath><clipPath id="tc3"><rect x="859.75" y="373.8" width="114.75" height="64.55"/></clipPath><clipPath id="tc4"><rect x="859.75" y="454.3" width="114.75" height="64.55"/></clipPath><clipPath id="tc5"><rect x="859.75" y="534.6" width="114.75" height="64.55"/></clipPath></defs>
<path d="M843.500 118V617" stroke="#d6d6d6" stroke-width="1"/>
<text x="989.500" y="138.70" font-size="11" fill="#333" text-anchor="middle" font-family="Liberation Sans, DejaVu Sans, sans-serif">1</text>
<path d="M990.40 143.35L991.19 145.56L993.54 145.63L991.68 147.07L992.34 149.32L990.40 148.00L988.46 149.32L989.12 147.07L987.26 145.63L989.61 145.56Z" fill="#4f4f4f"/><path d="M985.300 144.5h1.800M985 146.1h1.500M985.300 147.7h1.300" stroke="#b5b5b5" stroke-width=".5"/>
<text x="989.500" y="219.15" font-size="11" fill="#d9532c" text-anchor="middle" font-family="Liberation Sans, DejaVu Sans, sans-serif">2</text>
<path d="M990.40 223.80L991.19 226.01L993.54 226.08L991.68 227.52L992.34 229.77L990.40 228.45L988.46 229.77L989.12 227.52L987.26 226.08L989.61 226.01Z" fill="#4f4f4f"/><path d="M985.300 224.9h1.800M985 226.5h1.500M985.300 228.1h1.300" stroke="#b5b5b5" stroke-width=".5"/>
<text x="989.500" y="299.45" font-size="11" fill="#333" text-anchor="middle" font-family="Liberation Sans, DejaVu Sans, sans-serif">3</text>
<path d="M990.40 304.10L991.19 306.31L993.54 306.38L991.68 307.82L992.34 310.07L990.40 308.75L988.46 310.07L989.12 307.82L987.26 306.38L989.61 306.31Z" fill="#4f4f4f"/><path d="M985.300 305.2h1.800M985 306.8h1.500M985.300 308.4h1.300" stroke="#b5b5b5" stroke-width=".5"/>
<text x="989.500" y="380.75" font-size="11" fill="#333" text-anchor="middle" font-family="Liberation Sans, DejaVu Sans, sans-serif">4</text>
<path d="M990.40 385.40L991.19 387.61L993.54 387.68L991.68 389.12L992.34 391.37L990.40 390.05L988.46 391.37L989.12 389.12L987.26 387.68L989.61 387.61Z" fill="#4f4f4f"/><path d="M985.300 386.5h1.800M985 388.1h1.500M985.300 389.7h1.300" stroke="#b5b5b5" stroke-width=".5"/>
<text x="989.500" y="461.25" font-size="11" fill="#333" text-anchor="middle" font-family="Liberation Sans, DejaVu Sans, sans-serif">5</text>
<path d="M990.40 465.90L991.19 468.11L993.54 468.18L991.68 469.62L992.34 471.87L990.40 470.55L988.46 471.87L989.12 469.62L987.26 468.18L989.61 468.11Z" fill="#4f4f4f"/><path d="M985.300 467.0h1.800M985 468.6h1.500M985.300 470.2h1.300" stroke="#b5b5b5" stroke-width=".5"/>
<text x="989.500" y="541.55" font-size="11" fill="#333" text-anchor="middle" font-family="Liberation Sans, DejaVu Sans, sans-serif">6</text>
<path d="M990.40 546.20L991.19 548.41L993.54 548.48L991.68 549.92L992.34 552.17L990.40 550.85L988.46 552.17L989.12 549.92L987.26 548.48L989.61 548.41Z" fill="#4f4f4f"/><path d="M985.300 547.3h1.800M985 548.9h1.500M985.300 550.5h1.300" stroke="#b5b5b5" stroke-width=".5"/>
<g clip-path="url(#tc0)"><rect x="859.75" y="131.75" width="114.75" height="64.55" fill="#3a749f"/>
<circle cx="874.700" cy="149.500" r="26.100" fill="none" stroke="#d6e9f8" stroke-width=".75"/><circle cx="874.500" cy="149.300" r="22.400" fill="#d2e8fa"/>
<circle cx="892.700" cy="166.300" r="5.900" fill="#7cc3cc"/><circle cx="899.400" cy="162.500" r="3.700" fill="#cfe9ec"/>
<circle cx="861" cy="174.600" r="3.500" fill="#cfe9f0"/><circle cx="867" cy="177.800" r="2.200" fill="#cfe9f0"/><circle cx="890.600" cy="176.500" r="1.400" fill="#d8ebf8"/><circle cx="862" cy="181" r="1.100" fill="#d8ebf8"/>
<circle cx="874.400" cy="197" r="14" fill="#6496bd"/><g fill="none" stroke="#8fb4d2" stroke-width=".4"><circle cx="874.400" cy="197" r="3"/><circle cx="874.400" cy="197" r="5.500"/><circle cx="874.400" cy="197" r="8"/><circle cx="874.400" cy="197" r="10.500"/><circle cx="874.400" cy="197" r="13"/></g>
<circle cx="924" cy="135" r="5" fill="none" stroke="#a9d0ea" stroke-width=".5"/><circle cx="918.600" cy="134" r="3.800" fill="#7db7d9"/><circle cx="926" cy="132.500" r="3" fill="#cfe5f8"/><circle cx="918.800" cy="139.900" r="1.200" fill="#e8f3fb"/>
<circle cx="949" cy="145" r="3.600" fill="none" stroke="#b9d9ee" stroke-width=".6"/><circle cx="948.3" cy="146" r="2.300" fill="#6fb3cf"/>
<g fill="none" stroke="#7ba6c6" stroke-width=".5"><circle cx="971" cy="184" r="3"/><circle cx="971" cy="184" r="4.5"/><circle cx="971" cy="184" r="6"/><circle cx="971" cy="184" r="7.5"/><circle cx="971" cy="184" r="9"/></g>
<circle cx="953.5" cy="189.500" r="7.600" fill="#d2e8fa"/><circle cx="945" cy="186" r="1" fill="#8cc9d3"/>
<text x="962.8" y="162.2" font-size="7" textLength="46.1" lengthAdjust="spacingAndGlyphs" fill="#f2f6fa" direction="rtl" text-anchor="start" font-family="Liberation Sans, DejaVu Sans, sans-serif">عنوان الموضوع</text>
<text x="962.8" y="170.4" font-size="7" textLength="24.3" lengthAdjust="spacingAndGlyphs" fill="#f2f6fa" direction="rtl" text-anchor="start" font-family="Liberation Sans, DejaVu Sans, sans-serif">الرئيسي</text>
</g>
<rect x="858.400" y="210.750" width="118.200" height="67.500" fill="#f5f6f6" stroke="#8c1519" stroke-width="2"/>
<clipPath id="tc1b"><rect x="859.400" y="211.750" width="116.200" height="65.500"/></clipPath>
<g clip-path="url(#tc1b)">
<rect x="921" y="211" width="1.700" height="67" fill="#4079a2"/><rect x="924.400" y="211" width="52" height="67" fill="#346e98"/>
<circle cx="890" cy="244.500" r="20.500" fill="none" stroke="#e3edf2" stroke-width=".7"/>
<ellipse cx="886.700" cy="242.600" rx="20.200" ry="18.700" fill="#d1e7fa" transform="rotate(-25 886.700 242.600)"/>
<circle cx="903.750" cy="255.100" r="4.600" fill="#6db5c4"/><circle cx="909.400" cy="252" r="2.800" fill="#c9e6e9"/>
<circle cx="897.500" cy="222.250" r="2.800" fill="#cbe6e8"/><circle cx="903.100" cy="223.250" r="1.300" fill="#cbe6e8"/>
<circle cx="878.100" cy="261.600" r="2.800" fill="#cbe6e8"/><circle cx="883.750" cy="263.900" r="1.300" fill="#cbe6e8"/>
<circle cx="870" cy="213.900" r="2.800" fill="#d6e9f8"/><circle cx="862.250" cy="215.500" r="3.500" fill="#6aaad6"/>
<circle cx="906.800" cy="271" r="3" fill="none" stroke="#dfe6ea" stroke-width=".5"/><circle cx="905.600" cy="272.600" r="3" fill="#62acc9"/>
<g fill="none" stroke="#5badd0" stroke-width=".35"><ellipse cx="982" cy="270" rx="14" ry="12"/><ellipse cx="982" cy="270" rx="12" ry="10.500"/><ellipse cx="982" cy="270" rx="10" ry="9"/><ellipse cx="982" cy="270" rx="8" ry="7.500"/></g>
<circle cx="953.750" cy="265.100" r="2" fill="#63b3c4"/><circle cx="960.600" cy="270.900" r="8.800" fill="none" stroke="#5fb2c6" stroke-width=".35"/><circle cx="960.600" cy="270.750" r="8.200" fill="#d2e8fa"/><circle cx="970.500" cy="274.800" r=".8" fill="#fff"/>
<text x="971.2" y="229.1" font-size="3.6" textLength="11.3" lengthAdjust="spacingAndGlyphs" fill="#fff" direction="rtl" text-anchor="start" font-weight="bold" font-family="Liberation Sans, DejaVu Sans, sans-serif">مقدمة</text>
<text x="971.2" y="237.7" font-size="1.9" textLength="39.4" lengthAdjust="spacingAndGlyphs" fill="#fff" direction="rtl" text-anchor="start" font-weight="bold" font-family="Liberation Sans, DejaVu Sans, sans-serif">تكتب مقدمة الموضوع بشكل ملخص عن محتويات العرض</text>
<text x="971.2" y="240.6" font-size="1.9" textLength="18.5" lengthAdjust="spacingAndGlyphs" fill="#fff" direction="rtl" text-anchor="start" font-weight="bold" font-family="Liberation Sans, DejaVu Sans, sans-serif">التقديمي الذي تريد تقديمه</text>
</g>
<g clip-path="url(#tc2)"><rect x="859.75" y="292.5" width="114.75" height="64.55" fill="#f5f7f8"/>
<circle cx="861" cy="310.500" r="9" fill="#bfe1e5"/><circle cx="872.2" cy="300.800" r="8.500" fill="#215d83"/><circle cx="878.5" cy="306.500" r="3" fill="#215d83"/>
<circle cx="904.8" cy="297" r="4.500" fill="#fff" stroke="#c9d3da" stroke-width=".5"/><circle cx="899.2" cy="296.300" r="4" fill="#6aaad6"/><path d="M907 293.500L909.500 296" stroke="#1d3d55" stroke-width=".9"/>
<text x="967.8" y="311.6" font-size="4.6" textLength="36.8" lengthAdjust="spacingAndGlyphs" fill="#4a7a9a" direction="rtl" text-anchor="start" font-family="Liberation Sans, DejaVu Sans, sans-serif">محتويات العرض التقديمي</text>
<path d="M887.0 324.4H918.3" stroke="#333" stroke-width="0.6" opacity="0.75" stroke-dasharray="3.2 .7 4.300 .7 2.400 .7 5 .7"/>
<path d="M887.0 328.0H918.3" stroke="#333" stroke-width="0.6" opacity="0.75" stroke-dasharray="3.2 .7 4.300 .7 2.400 .7 5 .7"/>
<path d="M887.0 331.8H918.3" stroke="#333" stroke-width="0.6" opacity="0.75" stroke-dasharray="3.2 .7 4.300 .7 2.400 .7 5 .7"/>
<path d="M887.0 335.5H918.3" stroke="#333" stroke-width="0.6" opacity="0.75" stroke-dasharray="3.2 .7 4.300 .7 2.400 .7 5 .7"/>
<path d="M887.0 338.7H918.3" stroke="#333" stroke-width="0.6" opacity="0.75" stroke-dasharray="3.2 .7 4.300 .7 2.400 .7 5 .7"/>
<circle cx="946.5" cy="340" r="15" fill="none" stroke="#2d5f80" stroke-width=".4"/><ellipse cx="946" cy="340.500" rx="14" ry="12.500" fill="#6aaad6"/>
<circle cx="955.8" cy="348" r="3.800" fill="#215d83"/><circle cx="961.3" cy="346.800" r="2" fill="#9fd3da"/><circle cx="940" cy="351" r="2.500" fill="#215d83"/><circle cx="952.8" cy="326.300" r="2" fill="#7cc3cc"/><circle cx="956.8" cy="326.700" r="1" fill="#7cc3cc"/>
<text x="954.0" y="342.8" font-size="4.6" textLength="14" lengthAdjust="spacingAndGlyphs" fill="#fff" direction="rtl" text-anchor="start" font-weight="bold" font-family="Liberation Sans, DejaVu Sans, sans-serif">الأهداف</text>
<circle cx="921.8" cy="354.500" r="3.600" fill="none" stroke="#c9d3da" stroke-width=".5"/><circle cx="920.8" cy="353.700" r="3.300" fill="#6aaad6"/>
</g>
<g clip-path="url(#tc3)"><rect x="859.75" y="373.8" width="114.75" height="64.55" fill="#3e79a4"/>
<circle cx="951" cy="401" r="26.500" fill="none" stroke="#d9ebf8" stroke-width=".7"/><circle cx="953.5" cy="399.500" r="27.500" fill="none" stroke="#8fc3dd" stroke-width=".5"/><circle cx="952" cy="400.500" r="23.300" fill="#d2e8fa"/>
<circle cx="933" cy="417" r="6" fill="#63b3c4"/><circle cx="926.5" cy="413.300" r="3.800" fill="#c9e6e9"/><circle cx="965.5" cy="426" r="4" fill="#c9e6e9"/><circle cx="959" cy="428.700" r="2.200" fill="#d2e8fa"/><circle cx="935.2" cy="427.500" r="1.200" fill="#d2e8fa"/>
<circle cx="941" cy="375.500" r="4" fill="#cfe5f8"/><circle cx="934" cy="376.200" r="2" fill="#cfe5f8"/><circle cx="936.7" cy="379.800" r="1" fill="#e8f3fb"/>
<circle cx="862.8" cy="376.500" r="3.500" fill="#6aaad6"/><path d="M867 374.300L871.500 377.500" stroke="#fff" stroke-width="1.200"/><circle cx="862" cy="382.500" r="1.200" fill="#e8f3fb"/>
<text x="968.0" y="402.5" font-size="6.5" textLength="34" lengthAdjust="spacingAndGlyphs" fill="#2d5f80" direction="rtl" text-anchor="start" font-family="Liberation Sans, DejaVu Sans, sans-serif">الموضوع الأول</text>
<text x="907.8" y="388.2" font-size="3.4" textLength="24" lengthAdjust="spacingAndGlyphs" fill="#fff" direction="rtl" text-anchor="start" font-weight="bold" font-family="Liberation Sans, DejaVu Sans, sans-serif">&lt; المحتوى الأول</text>
<text x="907.8" y="400.5" font-size="3.4" textLength="24" lengthAdjust="spacingAndGlyphs" fill="#fff" direction="rtl" text-anchor="start" font-weight="bold" font-family="Liberation Sans, DejaVu Sans, sans-serif">&lt; المحتوى الثاني</text>
<text x="907.8" y="413.4" font-size="3.4" textLength="24" lengthAdjust="spacingAndGlyphs" fill="#fff" direction="rtl" text-anchor="start" font-weight="bold" font-family="Liberation Sans, DejaVu Sans, sans-serif">&lt; المحتوى الثالث</text>
<text x="907.8" y="425.7" font-size="3.4" textLength="25" lengthAdjust="spacingAndGlyphs" fill="#fff" direction="rtl" text-anchor="start" font-weight="bold" font-family="Liberation Sans, DejaVu Sans, sans-serif">&lt; المحتوى الرابع</text>
</g>
<g clip-path="url(#tc4)"><rect x="859.75" y="454.3" width="114.75" height="64.55" fill="#f5f7f8"/>
<rect x="857" y="452" width="14" height="13" rx="2" fill="#215d83"/><circle cx="872.5" cy="461.500" r=".8" fill="#215d83"/>
<circle cx="894.3" cy="459" r="5" fill="#fff" stroke="#c9d3da" stroke-width=".5"/><circle cx="889.3" cy="458.300" r="4.200" fill="#6aaad6"/><path d="M895.800 455L899.500 458.500" stroke="#1d3d55" stroke-width=".9"/>
<clipPath id="hc5"><rect x="917" y="454" width="40" height="66"/></clipPath><g clip-path="url(#hc5)">
<circle cx="914.8" cy="492.5" r="27" fill="#63b3c4"/>
<circle cx="914.3" cy="496.5" r="23" fill="#215d83"/>
<circle cx="913.8" cy="500.5" r="19" fill="#cfe5f8"/>
<circle cx="913.3" cy="504.5" r="15" fill="#6aaad6"/>
<circle cx="912.8" cy="508.5" r="11" fill="#3f79a5"/>
</g>
<path d="M974.100 454V520" stroke="#4079a2" stroke-width=".8"/>
<text x="973.0" y="466.6" font-size="4.6" textLength="27.8" lengthAdjust="spacingAndGlyphs" fill="#3f6f94" direction="rtl" text-anchor="start" font-weight="bold" font-family="Liberation Sans, DejaVu Sans, sans-serif">&lt; المحتوى الأول</text>
<path d="M952.0 472.2H968.5" stroke="#222" stroke-width="0.7" opacity="0.8" stroke-dasharray="3.2 .7 4.300 .7 2.400 .7 5 .7"/>
<circle cx="961" cy="504.800" r="12.800" fill="#cfe5f8"/><ellipse cx="963" cy="503" rx="12" ry="11.500" fill="#d2e8fa"/>
<path d="M953.5 504.8H970.0" stroke="#2d4a5e" stroke-width="0.8" opacity="0.8" stroke-dasharray="3.2 .7 4.300 .7 2.400 .7 5 .7"/>
<circle cx="950.8" cy="512.700" r="3.600" fill="#63b3c4"/><circle cx="937.8" cy="516.800" r="2.700" fill="#7fc4cf"/><circle cx="955.8" cy="489.800" r="2" fill="#c4e3e6"/><circle cx="946" cy="511.200" r="1.200" fill="#9fd3da"/>
<path d="M882.7 471.0H905.2" stroke="#222" stroke-width="0.7" opacity="0.8" stroke-dasharray="3.2 .7 4.300 .7 2.400 .7 5 .7"/>
<path d="M882.7 479.3H905.2" stroke="#222" stroke-width="0.7" opacity="0.8" stroke-dasharray="3.2 .7 4.300 .7 2.400 .7 5 .7"/>
<path d="M882.7 487.0H905.2" stroke="#222" stroke-width="0.7" opacity="0.8" stroke-dasharray="3.2 .7 4.300 .7 2.400 .7 5 .7"/>
<path d="M882.7 495.0H905.2" stroke="#222" stroke-width="0.7" opacity="0.8" stroke-dasharray="3.2 .7 4.300 .7 2.400 .7 5 .7"/>
<path d="M882.7 503.3H905.2" stroke="#222" stroke-width="0.7" opacity="0.8" stroke-dasharray="3.2 .7 4.300 .7 2.400 .7 5 .7"/>
<path d="M896.0 469.0H905.2" stroke="#5b9bd0" stroke-width="0.5" opacity="0.7"/>
<path d="M896.0 477.3H905.2" stroke="#5b9bd0" stroke-width="0.5" opacity="0.7"/>
<path d="M896.0 493.0H905.2" stroke="#5b9bd0" stroke-width="0.5" opacity="0.7"/>
<path d="M896.0 501.3H905.2" stroke="#5b9bd0" stroke-width="0.5" opacity="0.7"/>
<path d="M910.0 469.5H913.0" stroke="#6a8aa0" stroke-width="0.9" opacity="0.6"/>
<path d="M910.0 477.5H913.0" stroke="#6a8aa0" stroke-width="0.9" opacity="0.6"/>
<path d="M910.0 493.5H913.0" stroke="#6a8aa0" stroke-width="0.9" opacity="0.6"/>
<path d="M910.0 501.3H913.0" stroke="#6a8aa0" stroke-width="0.9" opacity="0.6"/>
</g>
<g clip-path="url(#tc5)"><rect x="859.75" y="534.6" width="114.75" height="64.55" fill="#fdfdfd"/>
<circle cx="866" cy="541" r="7" fill="none" stroke="#b9d9ee" stroke-width=".5"/><circle cx="864.5" cy="540" r="6.300" fill="#215d83"/>
<circle cx="905.5" cy="538.500" r="4.500" fill="#fff" stroke="#c9d3da" stroke-width=".5"/><circle cx="900.7" cy="537.800" r="3.800" fill="#6aaad6"/><path d="M907.500 535L910 537.500" stroke="#1d3d55" stroke-width=".9"/>
<text x="970.0" y="544.4" font-size="4.6" textLength="25.8" lengthAdjust="spacingAndGlyphs" fill="#3f6f94" direction="rtl" text-anchor="start" font-weight="bold" font-family="Liberation Sans, DejaVu Sans, sans-serif">&lt; المحتوى الثاني</text>
<rect x="868.300" y="551.750" width="62.700" height="27.800" rx="1" fill="#346e98"/>
<path d="M870.3 562.7H929.5" stroke="#fff" stroke-width="0.9" opacity="0.9" stroke-dasharray="3.2 .7 4.300 .7 2.400 .7 5 .7"/><path d="M904.0 565.7H929.5" stroke="#fff" stroke-width="0.9" opacity="0.9" stroke-dasharray="3.2 .7 4.300 .7 2.400 .7 5 .7"/>
<path d="M883.0 583.3H928.8" stroke="#222" stroke-width="0.8" opacity="0.8" stroke-dasharray="3.2 .7 4.300 .7 2.400 .7 5 .7"/>
<path d="M946.0 557.8H967.0" stroke="#222" stroke-width="0.8" opacity="0.8" stroke-dasharray="3.2 .7 4.300 .7 2.400 .7 5 .7"/><path d="M946.0 561.5H967.0" stroke="#222" stroke-width="0.8" opacity="0.8" stroke-dasharray="3.2 .7 4.300 .7 2.400 .7 5 .7"/>
<circle cx="961" cy="584.800" r="12.800" fill="#cfe5f8"/><ellipse cx="963" cy="583" rx="12" ry="11.500" fill="#d2e8fa"/>
<path d="M952.0 584.5H969.0" stroke="#2d4a5e" stroke-width="0.8" opacity="0.8" stroke-dasharray="3.2 .7 4.300 .7 2.400 .7 5 .7"/>
<circle cx="949" cy="593" r="3.600" fill="#63b3c4"/><circle cx="937.8" cy="597.200" r="2.700" fill="#6aaad6"/><circle cx="953.5" cy="570.500" r="2" fill="#c4e3e6"/>
<g fill="none" stroke="#a9d8de" stroke-width=".7"><circle cx="870.3" cy="598" r="1.5"/><circle cx="870.3" cy="598" r="3"/><circle cx="870.3" cy="598" r="4.5"/><circle cx="870.3" cy="598" r="6"/><circle cx="870.3" cy="598" r="7.5"/><circle cx="870.3" cy="598" r="9"/><circle cx="870.3" cy="598" r="10.5"/></g>
</g>
<rect x="859.35" y="131.35" width="115.55" height="65.35" fill="none" stroke="#f4f4f4" stroke-width=".8"/>
<rect x="859.35" y="292.1" width="115.55" height="65.35" fill="none" stroke="#f4f4f4" stroke-width=".8"/>
<rect x="859.35" y="373.40000000000003" width="115.55" height="65.35" fill="none" stroke="#f4f4f4" stroke-width=".8"/>
<rect x="859.35" y="453.90000000000003" width="115.55" height="65.35" fill="none" stroke="#f4f4f4" stroke-width=".8"/>
<rect x="859.35" y="534.2" width="115.55" height="65.35" fill="none" stroke="#f4f4f4" stroke-width=".8"/>
</svg>
<div id="notes" class="abs"></div>
<div id="status" class="abs"></div>
<div id="taskbar" class="abs"></div>
<svg id="botsvg" class="abs" style="left:0;top:617px" width="1000" height="51" viewBox="0 617 1000 51" fill="none">
<!-- STATUS BAR -->
<rect x="235" y="618" width="28" height="15.300" fill="#d9d9d9"/>
<g stroke="#5f5f5f" stroke-width=".9" transform="translate(0 .6)">
<!-- fit -->
<rect x="3.500" y="622.300" width="5.500" height="5.500" rx=".8"/><path d="M6.250 619.800V621.500M6.250 628.500V630.200M1 625H2.700M9.800 625H11.500M5.200 620.800L6.250 619.700L7.300 620.800M5.200 629.200L6.250 630.300L7.300 629.200M2 624L.9 625L2 626M10.500 624L11.600 625L10.500 626" stroke-width=".7"/>
<!-- zoom slider -->
<path d="M50.500 625.300H55M52.750 623V627.600" stroke="#777" stroke-width=".8"/><path d="M137.500 625.300H141.500" stroke="#777" stroke-width=".8"/>
<path d="M60 625.300H132M96.250 623.500V627" stroke="#9a9a9a" stroke-width=".7"/>
<rect x="105.300" y="620.800" width="3.400" height="8.800" fill="#6a6a6a" stroke="none"/>
<!-- slideshow -->
<rect x="156.800" y="620.500" width="9" height="6"/><path d="M161.300 626.500V629.500M158.500 629.800H164"/>
<!-- reading -->
<path d="M190.500 621.500V629.500M190.500 621.500C189 620.500 187.500 620.500 186 621V629C187.500 628.500 189 628.500 190.500 629.500C192 628.500 193.500 628.500 195 629V621C193.500 620.500 192 620.500 190.500 621.500"/><path d="M187.500 623H189M187.500 625H189M192 623H193.500M192 625H193.500" stroke-width=".5"/>
<!-- sorter -->
<rect x="216" y="621" width="3.200" height="3.200"/><rect x="221" y="621" width="3.200" height="3.200"/><rect x="216" y="626" width="3.200" height="3.200"/><rect x="221" y="626" width="3.200" height="3.200"/>
<!-- normal -->
<rect x="244" y="621" width="10" height="8" stroke="#444"/><path d="M246.500 621V629M248.500 623.500H252M248.500 626H252" stroke="#444" stroke-width=".8"/>
<!-- comments -->
<path d="M304 620.300H312.500V626.500H309.500L308 629V626.500H304Z"/>
<!-- notes -->
<path d="M358 623H368M358 625.500H368M358 628H368M360.500 621L363 618.800L365.500 621" stroke-width=".8"/>
<!-- spell -->
<path d="M922.500 621H927V629H922.500ZM927 621H931V625" /><path d="M928 626.500L931 629.500M931 626.500L928 629.500" stroke-width=".8"/>
</g>
<!-- TASKBAR -->
<rect x="268" y="635.800" width="29" height="28.700" rx="2.500" fill="#2f2920"/>
<rect x="277" y="662.800" width="11" height="1.900" rx=".9" fill="#f2b63c"/>
<rect x="313" y="663" width="4" height="1.500" rx=".7" fill="#8a8682"/><rect x="345" y="663" width="4" height="1.500" rx=".7" fill="#8a8682"/>
<!-- bell -->
<g stroke="#e8e6e3" stroke-width=".9"><path d="M15.500 654V649.500C15.500 645.500 22 645.500 22 649.500V654M14.500 654.300H23M17.500 656H20"/><path d="M20.500 645L23 645L20.800 648H23.300" stroke-width=".7"/></g>
<!-- battery -->
<rect x="80.500" y="647.300" width="10" height="6.800" rx="1.300" stroke="#f0eeeb" stroke-width=".9"/><rect x="82" y="648.800" width="5" height="3.800" fill="#f0eeeb"/><path d="M91.500 649.500V652" stroke="#f0eeeb" stroke-width="1"/>
<!-- volume -->
<path d="M98.500 649.300H100.300L103 647V654.500L100.300 652.200H98.500Z" stroke="#f0eeeb" stroke-width=".8"/><path d="M104.800 648.800Q106 650.750 104.800 652.700M106.500 647.500Q108.500 650.750 106.500 654M108.200 646.300Q111 650.750 108.200 655.200" stroke="#f0eeeb" stroke-width=".8"/>
<!-- wifi -->
<g stroke="#f0eeeb" stroke-width="1"><path d="M116 649.300Q121.250 644.500 126.500 649.300M117.800 651.300Q121.250 648.200 124.700 651.300M119.500 653.200Q121.250 651.700 123 653.200"/></g><circle cx="121.250" cy="654.800" r=".8" fill="#f0eeeb"/>
<!-- chevron -->
<path d="M173.800 652.500L177 649.300L180.200 652.500" stroke="#f0eeeb" stroke-width="1"/>
<!-- powerpoint -->
<circle cx="282.800" cy="650.800" r="8.300" fill="#d35230"/><path d="M282.800 642.500A8.300 8.300 0 0 1 291.100 650.800H282.800Z" fill="#ff8f6b"/><path d="M282.800 650.800H291.100A8.300 8.300 0 0 1 282.800 659.100Z" fill="#ed6c47"/><rect x="273.300" y="646.200" width="9.300" height="9.300" rx="1" fill="#c43e1c"/>
<!-- explorer -->
<path d="M306.500 644.500H312L313.500 646H322.500Q323.500 646 323.500 647V657Q323.500 658 322.500 658H306.500Z" fill="#f9c83b"/><rect x="306.500" y="648.300" width="17" height="9.700" rx="1" fill="#fcd95c"/><rect x="309.500" y="654.500" width="11" height="3.500" rx=".8" fill="#1f7fd1"/>
<!-- chrome -->
<circle cx="347" cy="650.800" r="8.600" fill="#e34133"/><path d="M347 650.800L339.600 646.500A8.600 8.600 0 0 0 344 658.900Z" fill="#2ba24c"/><path d="M347 650.800L344 658.900A8.600 8.600 0 0 0 354.500 646.500L347 650.800Z" fill="#fbc116"/><path d="M339.600 646.500A8.600 8.600 0 0 1 354.500 646.500H347Z" fill="#e34133"/><circle cx="347" cy="650.800" r="4" fill="#fff"/><circle cx="347" cy="650.800" r="3.200" fill="#3b7de9"/>
<!-- messenger -->
<defs><linearGradient id="msg" x1="0" y1="1" x2="1" y2="0"><stop offset="0" stop-color="#2f7df6"/><stop offset=".5" stop-color="#a13df0"/><stop offset="1" stop-color="#f8626b"/></linearGradient>
<linearGradient id="pv" x1="0" y1="0" x2="1" y2="1"><stop offset="0" stop-color="#8a5cf5"/><stop offset=".6" stop-color="#6d7cf0"/><stop offset="1" stop-color="#4fe0d0"/></linearGradient>
<linearGradient id="cop" x1="0" y1="0" x2="1" y2="1"><stop offset="0" stop-color="#2b8fe8"/><stop offset=".35" stop-color="#7a5cf0"/><stop offset=".65" stop-color="#e8588a"/><stop offset="1" stop-color="#f5b342"/></linearGradient></defs>
<path d="M379.300 642.200C374.300 642.200 370.600 645.800 370.600 650.500C370.600 653 371.600 655.100 373.300 656.600V659.700L376.200 658.100C377.200 658.400 378.200 658.500 379.300 658.500C384.300 658.500 388 655 388 650.500C388 645.800 384.300 642.200 379.300 642.200Z" fill="url(#msg)"/><path d="M374.200 652.800L377.500 648.300L379.800 650.300L383.800 648.200L380.600 652.800L378.300 650.800Z" fill="#fff"/>
<!-- telegram -->
<circle cx="411.800" cy="650.800" r="8.300" fill="#2aa3df"/><path d="M406.800 650.700L416.300 646.800L414.800 655.200L412 653L410.500 654.700L410.300 652.200L414.500 648.300L409.300 651.700Z" fill="#fff"/>
<!-- whatsapp x2 -->
<g stroke="#2fd56a" stroke-width="1.700"><path d="M443.800 643.200A7.600 7.600 0 1 1 437.500 654.800L436.500 658.300L440.200 657.400A7.600 7.600 0 0 1 443.800 643.200Z" transform="rotate(0)"/><circle cx="443.800" cy="650.800" r="7.500"/><circle cx="476.300" cy="651" r="7.500"/></g>
<path d="M436.300 658.500L437.800 654.500L440.300 657.300Z" fill="#2fd56a"/><path d="M468.800 658.700L470.300 654.700L472.800 657.500Z" fill="#2fd56a"/>
<path d="M441 647.300C440.500 649.500 443.500 654 446.800 654.300L447.500 652.800L445.800 651.800L445 652.500C444 652 443 650.800 442.700 649.800L443.400 649L442.600 647.200Z" fill="#2fd56a"/>
<path d="M473.500 647.500C473 649.700 476 654.200 479.300 654.500L480 653L478.300 652L477.500 652.700C476.500 652.200 475.500 651 475.200 650L475.900 649.200L475.100 647.400Z" fill="#2fd56a"/>
<circle cx="469.500" cy="644" r="4.600" fill="#f4c430"/>
<!-- phone link-ish -->
<rect x="504.500" y="644.500" width="11" height="11" rx="1.500" fill="#1c8fe0"/><rect x="501.500" y="648" width="8" height="9" rx="1.300" fill="#47b5f5"/><circle cx="501.300" cy="643.300" r="4.800" fill="#f4c430"/>
<!-- proton-like triangle -->
<path d="M531.800 643.500Q531 642.300 532.500 642.300L548.800 643.500Q550.300 643.700 549.500 645L541.800 658.500Q540.800 660 539.800 658.500Z" fill="url(#pv)"/><path d="M535.500 646.500L545.500 647.200L540.800 655.500Z" fill="#d9f5f5" opacity=".55"/>
<!-- store -->
<path d="M568.500 646.500V644.800Q568.500 642.500 570.800 642.500H574.200Q576.500 642.500 576.500 644.800V646.500" stroke="#35a6f0" stroke-width="1.200"/><rect x="564.500" y="645.800" width="16" height="13.700" rx="2" fill="#f3f1ee"/><rect x="568.300" y="648.800" width="3.600" height="3.600" fill="#f25022"/><rect x="572.900" y="648.800" width="3.600" height="3.600" fill="#7fba00"/><rect x="568.300" y="653.400" width="3.600" height="3.600" fill="#00a4ef"/><rect x="572.900" y="653.400" width="3.600" height="3.600" fill="#ffb900"/>
<!-- copilot -->
<path d="M600.500 644.500Q601.500 642.800 603.500 642.800H608.500Q611 642.800 611.800 645.200L613 649Q613.500 651 612 651H610L609.500 656.500Q608.800 659 606.500 659H601.500Q599 659 598.300 656.600L597.300 652.800Q596.800 650.800 598.500 650.800H600Z" fill="url(#cop)"/><path d="M602.500 648H607.500L606.500 654H601.500Z" fill="#201a12" opacity=".35"/>
<!-- task view -->
<rect x="634.500" y="647.500" width="10.500" height="10.500" rx="1.300" fill="#7d7a78"/><rect x="629.500" y="643.500" width="10.500" height="10.500" rx="1.300" fill="#f1efed"/>
<!-- search pill -->
<rect x="656.300" y="639" width="72.500" height="23" rx="11.500" fill="#3b342b"/>
<g stroke="#f0eeeb" stroke-width="1.100"><circle cx="703.300" cy="649.800" r="3.300"/><path d="M700.900 652.200L697.800 655.300"/></g>
<!-- start -->
<g fill="#3ea2ea"><rect x="739.500" y="642.500" width="8" height="8" rx=".6"/><rect x="748.500" y="642.500" width="8" height="8" rx=".6"/><rect x="739.500" y="651.500" width="8" height="8" rx=".6"/><rect x="748.500" y="651.500" width="8" height="8" rx=".6"/></g>
<!-- weather -->
<circle cx="973.500" cy="648.500" r="4" fill="#f5a623"/><path d="M971.500 658.300Q968.300 658.300 968.300 655.300Q968.300 652.500 971.300 652.300Q972.300 649.300 975.800 649.300Q979.300 649.300 980.300 652.300Q985.800 652 985.800 655.300Q985.800 658.300 982.800 658.300Z" fill="#dbe9f9"/><path d="M971.500 658.300Q968.300 658.300 968.300 655.300Q975 657 985.800 655.300Q985.800 658.300 982.800 658.300Z" fill="#9cc2ee"/>
<circle cx="989.600" cy="643.200" r="4.800" fill="#f28b9b"/>
</svg>
<div class="t ltr" style="left:125.3px;top:8.8px;font-size:8px;color:#fff">H</div>
<div class="t ltr" style="left:143.0px;top:7.6px;font-size:9.5px;color:#fff;transform:scaleX(0.893)">hedar</div>
<div class="t rtl" style="right:408.0px;top:7.2px;font-size:9.5px;color:#5e3526;transform:scaleX(0.895)">بحث</div>
<div class="t ltr" style="left:673.8px;top:7.3px;font-size:9.3px;color:#fff;transform:scaleX(0.894)">PowerPoint</div>
<div class="t ltr" style="left:723.0px;top:7.3px;font-size:9.3px;color:#fff">-</div>
<div class="t rtl" style="right:187.5px;top:7.2px;font-size:9.5px;color:#fff;transform:scaleX(0.864)">اضطرابات النطق واللغة</div>
<div class="t rtl" style="right:310.6px;top:214.2px;font-size:28px;color:#f2f6fa;transform:scaleX(0.827)">مقدمة</div>
<div class="t rtl" style="right:310.6px;top:278.0px;font-size:11px;color:#eef3f8;transform:scaleX(0.893)">تكتب مقدمة الموضوع بشكل ملخص عن محتويات العرض</div>
<div class="t rtl" style="right:310.6px;top:295.0px;font-size:11px;color:#eef3f8;transform:scaleX(0.875)">التقديمي الذي تريد تقديمه</div>
<div class="t rtl" style="right:164.5px;top:596.2px;font-size:11px;color:#444;transform:scaleX(0.950)">انقر لإضافة ملاحظات</div>
<div class="t rtl" style="right:10.5px;top:31.5px;font-size:10px;color:#444;transform:scaleX(0.920)">ملف</div>
<div class="t rtl" style="right:49.2px;top:31.2px;font-size:10px;color:#262626;font-weight:bold;transform:scaleX(0.951)">الشريط الرئيسي</div>
<div class="t rtl" style="right:148.7px;top:31.5px;font-size:10px;color:#444;transform:scaleX(0.883)">إدراج</div>
<div class="t rtl" style="right:190.0px;top:31.5px;font-size:10px;color:#444;transform:scaleX(0.986)">رسم</div>
<div class="t rtl" style="right:233.0px;top:31.5px;font-size:10px;color:#444;transform:scaleX(0.966)">تصميم</div>
<div class="t rtl" style="right:282.0px;top:31.5px;font-size:10px;color:#444;transform:scaleX(0.956)">انتقالات</div>
<div class="t rtl" style="right:335.7px;top:31.5px;font-size:10px;color:#444;transform:scaleX(0.899)">حركات</div>
<div class="t rtl" style="right:387.6px;top:31.5px;font-size:10px;color:#444;transform:scaleX(0.962)">عرض الشرائح</div>
<div class="t rtl" style="right:467.4px;top:31.2px;font-size:10px;color:#262626;font-weight:bold;transform:scaleX(0.949)">مراجعة</div>
<div class="t rtl" style="right:522.4px;top:31.5px;font-size:10px;color:#444;transform:scaleX(0.874)">عرض</div>
<div class="t rtl" style="right:566.2px;top:31.5px;font-size:10px;color:#444;transform:scaleX(1.043)">تسجيل</div>
<div class="t rtl" style="right:620.0px;top:31.5px;font-size:10px;color:#444;transform:scaleX(0.954)">تعليمات</div>
<div class="t ltr" style="left:292.0px;top:31.3px;font-size:10px;color:#444;transform:scaleX(0.957)">Acrobat</div>
<div class="t rtl" style="right:950.0px;top:31.0px;font-size:10px;color:#b7472a;font-weight:bold;transform:scaleX(0.959)">مشاركة</div>
<div class="t rtl" style="right:12.9px;top:77.3px;font-size:10px;color:#333;transform:scaleX(0.802)">لصق</div>
<div class="t rtl" style="right:17.1px;top:106.4px;font-size:9px;color:#555;transform:scaleX(0.782)">الحافظة</div>
<div class="t rtl" style="right:80.3px;top:76.8px;font-size:10px;color:#333;transform:scaleX(0.888)">شريحة</div>
<div class="t rtl" style="right:78.1px;top:87.6px;font-size:10px;color:#333;transform:scaleX(0.854)">جديدة</div>
<div class="t rtl" style="right:126.1px;top:53.4px;font-size:10px;color:#333;transform:scaleX(0.785)">تخطيط</div>
<div class="t rtl" style="right:126.1px;top:71.4px;font-size:10px;color:#333;transform:scaleX(0.876)">إعادة تعيين</div>
<div class="t rtl" style="right:126.1px;top:89.4px;font-size:10px;color:#333;transform:scaleX(0.814)">مقطع</div>
<div class="t rtl" style="right:113.1px;top:106.7px;font-size:9px;color:#555;transform:scaleX(0.844)">شرائح</div>
<div class="t rtl" style="right:293.0px;top:59.8px;font-size:9px;color:#c0c0c0;transform:scaleX(0.858)">١٨</div>
<div class="t ltr" style="left:660.8px;top:56.5px;font-size:11.5px;color:#a3a3a3;transform:scaleX(1.004)">A</div>
<div class="t ltr" style="left:645.0px;top:58.5px;font-size:9.5px;color:#a3a3a3;transform:scaleX(0.977)">A</div>
<div class="t ltr" style="left:622.8px;top:57.8px;font-size:10px;color:#a3a3a3;transform:scaleX(0.914)">A</div>
<div class="t ltr" style="left:636.0px;top:80.0px;font-size:10.5px;color:#a3a3a3;transform:scaleX(1.026)">A</div>
<div class="t ltr" style="left:692.1px;top:82.0px;font-size:10.5px;color:#a3a3a3;transform:scaleX(0.958)">Aa</div>
<div class="t ltr" style="left:719.3px;top:80.0px;font-size:9px;color:#a3a3a3;transform:scaleX(1.005)">AV</div>
<div class="t ltr" style="left:737.5px;top:82.2px;font-size:9.5px;color:#a3a3a3;transform:scaleX(0.785)">ab</div>
<div class="t ltr" style="left:755.0px;top:81.8px;font-size:10.5px;color:#a3a3a3;transform:scaleX(0.884)">S</div>
<div class="t ltr" style="left:771.5px;top:81.5px;font-size:10px;color:#a3a3a3;transform:scaleX(0.940)">U</div>
<div class="t ltr" style="left:790.3px;top:81.8px;font-size:10.5px;color:#a3a3a3;font-style:italic;transform:scaleX(1.266)">I</div>
<div class="t ltr" style="left:806.0px;top:81.8px;font-size:10.5px;color:#a3a3a3;font-weight:bold;transform:scaleX(0.869)">B</div>
<div class="t ltr" style="left:504.0px;top:82.0px;font-size:10px;color:#ababab;transform:scaleX(1.023)">¶</div>
<div class="t rtl" style="right:270.4px;top:106.4px;font-size:9px;color:#555;transform:scaleX(0.702)">خط</div>
<div class="t rtl" style="right:460.8px;top:106.4px;font-size:9px;color:#555;transform:scaleX(0.776)">فقرة</div>
<div class="t ltr" style="left:420.3px;top:56.5px;font-size:6.5px;color:#3f93d8;font-weight:bold;transform:scaleX(0.914)">A</div>
<div class="t rtl" style="right:677.6px;top:77.3px;font-size:10px;color:#333;transform:scaleX(0.803)">ترتيب</div>
<div class="t rtl" style="right:712.3px;top:77.3px;font-size:10px;color:#b0b0b0;transform:scaleX(0.791)">أنماط</div>
<div class="t rtl" style="right:704.8px;top:87.8px;font-size:10px;color:#b0b0b0;transform:scaleX(0.893)">سريعة</div>
<div class="t rtl" style="right:756.0px;top:53.0px;font-size:10px;color:#b0b0b0;transform:scaleX(0.917)">تعبئة الشكل</div>
<div class="t rtl" style="right:756.0px;top:71.0px;font-size:10px;color:#b0b0b0;transform:scaleX(0.823)">إطار الشكل</div>
<div class="t rtl" style="right:756.0px;top:87.0px;font-size:10px;color:#b0b0b0;transform:scaleX(0.872)">تأثيرات الأشكال</div>
<div class="t rtl" style="right:683.2px;top:106.7px;font-size:9px;color:#555;transform:scaleX(0.805)">رسم</div>
<div class="t rtl" style="right:853.0px;top:53.0px;font-size:10px;color:#333;transform:scaleX(0.839)">بحث</div>
<div class="t rtl" style="right:853.0px;top:70.0px;font-size:10px;color:#333;transform:scaleX(0.923)">استبدال</div>
<div class="t rtl" style="right:853.0px;top:86.5px;font-size:10px;color:#333;transform:scaleX(0.888)">تحديد</div>
<div class="t rtl" style="right:860.0px;top:106.7px;font-size:9px;color:#555;transform:scaleX(0.751)">تحرير</div>
<div class="t ltr" style="left:55.0px;top:77.2px;font-size:9.5px;color:#333;transform:scaleX(0.877)">Create</div>
<div class="t ltr" style="left:56.0px;top:87.7px;font-size:9.5px;color:#333;transform:scaleX(0.854)">a PDF</div>
<div class="t ltr" style="left:42.6px;top:107.2px;font-size:8px;color:#555;transform:scaleX(0.960)">Adobe Acrobat</div>
<div class="t ltr" style="left:22.0px;top:621.5px;font-size:9px;color:#555;transform:scaleX(0.860)">71%</div>
<div class="t rtl" style="right:699.2px;top:621.7px;font-size:9px;color:#444;transform:scaleX(0.823)">تعليقات</div>
<div class="t rtl" style="right:645.0px;top:621.7px;font-size:9px;color:#444;transform:scaleX(0.815)">ملاحظات</div>
<div class="t rtl" style="right:5.2px;top:621.2px;font-size:9px;color:#555;transform:scaleX(0.882)">شريحة ٢ من ٦</div>
<div class="t rtl" style="right:91.0px;top:621.2px;font-size:9px;color:#555;transform:scaleX(0.855)">العربية (المملكة العربية السعودية)</div>
<div class="t rtl" style="right:945.5px;top:639.8px;font-size:9px;color:#f0eeeb;transform:scaleX(0.819)">١٢:٣٩ م</div>
<div class="t rtl" style="right:932.0px;top:651.8px;font-size:9px;color:#f0eeeb;transform:scaleX(0.870)">٢٠٢٥/٠٢/٢١</div>
<div class="t rtl" style="right:847.5px;top:645.5px;font-size:10px;color:#f0eeeb;transform:scaleX(1.089)">ع</div>
<div class="t ltr" style="left:275.8px;top:647.5px;font-size:7px;color:#fff;font-weight:bold;transform:scaleX(0.963)">P</div>
<div class="t ltr" style="left:468.0px;top:641.2px;font-size:6px;color:#222">1</div>
<div class="t rtl" style="right:495.8px;top:640.5px;font-size:5.5px;color:#222;transform:scaleX(0.963)">٣٦</div>
<div class="t rtl" style="right:308.0px;top:646.5px;font-size:9.5px;color:#f0eeeb;transform:scaleX(0.828)">بحث</div>
<div class="t ltr" style="left:949.3px;top:640.0px;font-size:9px;color:#fff;transform:scaleX(0.907)">8°C</div>
<div class="t rtl" style="right:37.0px;top:652.0px;font-size:9px;color:#d0cdc9;transform:scaleX(0.974)">غائم غالبًا</div>
<div class="t rtl" style="right:8.6px;top:640.0px;font-size:6.5px;color:#222;transform:scaleX(1.029)">٣</div>
<div class="t ltr" style="left:153.6px;top:67.8px;font-size:7px;color:#b04fc4;transform:scaleX(0.870)">b</div>
<div class="t ltr" style="left:156.6px;top:73.8px;font-size:7px;color:#2b9fe0;transform:scaleX(0.857)">c</div>
<div class="t ltr" style="left:518.3px;top:82.0px;font-size:10px;color:#b3b3b3;transform:scaleX(0.967)">¶</div>
</body>
</html>
